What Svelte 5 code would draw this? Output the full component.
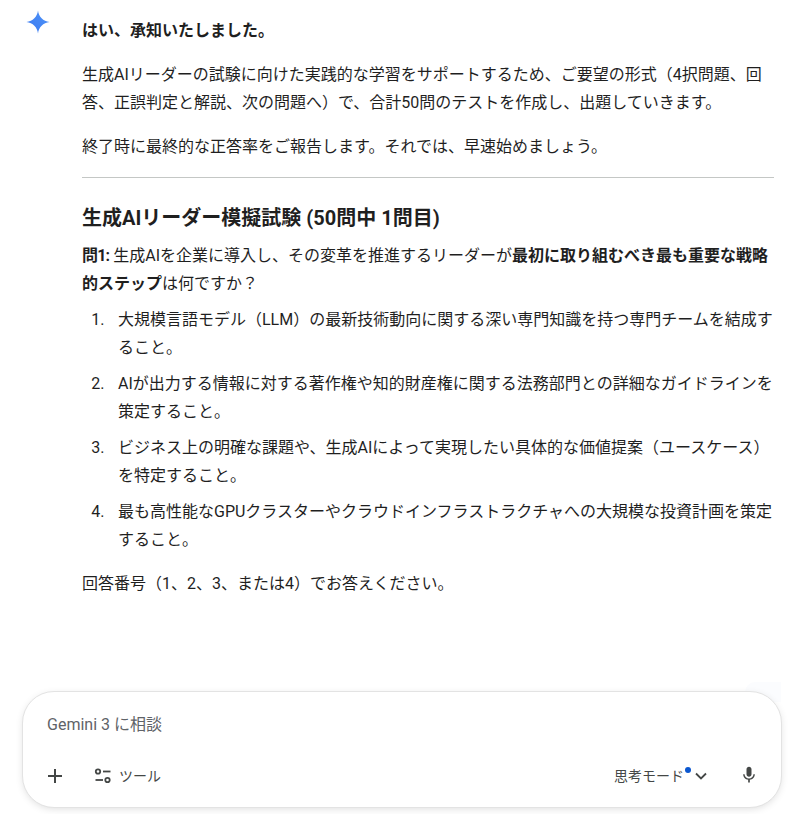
<script>
  const options = [
    '大規模言語モデル（LLM）の最新技術動向に関する深い専門知識を持つ専門チームを結成すること。',
    'AIが出力する情報に対する著作権や知的財産権に関する法務部門との詳細なガイドラインを策定すること。',
    'ビジネス上の明確な課題や、生成AIによって実現したい具体的な価値提案（ユースケース）を特定すること。',
    '最も高性能なGPUクラスターやクラウドインフラストラクチャへの大規模な投資計画を策定すること。'
  ];
</script>

<div class="page">
  <main class="response">
    <div class="avatar">
      <svg width="24" height="24" viewBox="0 0 24 24">
        <defs>
          <linearGradient id="spark" x1="0" y1="1" x2="1" y2="0">
            <stop offset="0" stop-color="#3b78f0" />
            <stop offset="1" stop-color="#4f95f8" />
          </linearGradient>
        </defs>
        <path fill="url(#spark)" d="M12 0.5C12.7 6.8 17.2 11.3 23.5 12C17.2 12.7 12.7 17.2 12 23.5C11.3 17.2 6.8 12.7 0.5 12C6.8 11.3 11.3 6.8 12 0.5Z" />
      </svg>
    </div>
    <div class="content">
      <p><strong>はい、承知いたしました。</strong></p>
      <p>生成AIリーダーの試験に向けた実践的な学習をサポートするため、ご要望の形式（4択問題、回答、正誤判定と解説、次の問題へ）で、合計50問のテストを作成し、出題していきます。</p>
      <p>終了時に最終的な正答率をご報告します。それでは、早速始めましょう。</p>
      <hr />
      <h2>生成AIリーダー模擬試験 (50問中 1問目)</h2>
      <p class="question"><strong class="qno">問1:</strong> 生成AIを企業に導入し、その変革を推進するリーダーが<strong>最初に取り組むべき最も重要な戦略的ステップ</strong>は何ですか？</p>
      <ol>
        {#each options as option}
          <li>{option}</li>
        {/each}
      </ol>
      <p>回答番号（1、2、3、または4）でお答えください。</p>
    </div>
  </main>

  <div class="composer">
    <div class="placeholder">Gemini 3 に相談</div>
    <div class="toolbar">
      <div class="left">
        <svg class="plus" width="24" height="24" viewBox="0 0 24 24"><path fill="#444746" d="M11 13H5v-2h6V5h2v6h6v2h-6v6h-2z" /></svg>
        <div class="tools">
          <svg width="20" height="20" viewBox="0 0 20 20" fill="none" stroke="#444746" stroke-width="1.8">
            <circle cx="5" cy="5.5" r="2.2" />
            <path d="M10 5.5h7.500" />
            <circle cx="14.500" cy="14" r="2.2" />
            <path d="M2.500 14h7.500" />
          </svg>
          <span>ツール</span>
        </div>
      </div>
      <div class="right">
        <div class="mode">
          <span class="mode-label">思考モード<i class="dot"></i></span>
          <svg width="18" height="18" viewBox="0 0 18 18" fill="none" stroke="#444746" stroke-width="1.8"><path d="M4 6.500l5 5 5-5" /></svg>
        </div>
        <svg class="mic" width="20" height="20" viewBox="0 0 24 24"><path fill="#444746" d="M12 14c1.66 0 3-1.34 3-3V5c0-1.66-1.34-3-3-3S9 3.34 9 5v6c0 1.66 1.34 3 3 3zm5.300-3c0 3-2.540 5.100-5.300 5.100S6.700 14 6.700 11H5c0 3.410 2.720 6.230 6 6.720V21h2v-3.280c3.280-.49 6-3.310 6-6.720h-1.700z" /></svg>
      </div>
    </div>
  </div>
</div>

<style>
  :global(body) {
    margin: 0;
    background: #fff;
  }

  .page {
    width: 790px;
    height: 814px;
    overflow: hidden;
    font-family: Roboto, "Noto Sans CJK JP", sans-serif;
    color: #1f1f1f;
    font-size: 16px;
    line-height: 28px;
    display: flex;
    flex-direction: column;
  }

  .response {
    flex: 1;
    display: flex;
    padding: 17px 16px 0 26px;
  }

  .avatar {
    width: 24px;
    height: 24px;
    margin-top: -7px;
    margin-right: 32px;
    flex-shrink: 0;
  }

  .content {
    width: 692px;
  }

  p {
    margin: 0 0 16px;
  }

  p.question {
    margin-bottom: 8px;
  }

  strong {
    font-weight: 700;
  }

  .qno {
    letter-spacing: -0.8px;
  }

  hr {
    border: 0;
    border-top: 1px solid #c4c7c5;
    margin: 15px 0 26px;
  }

  h2 {
    font-size: 20px;
    line-height: 28px;
    font-weight: 700;
    margin: 0 0 10px;
  }

  ol {
    margin: 0 0 16px;
    padding-left: 36px;
  }

  li {
    margin-bottom: 8px;
  }

  li::marker {
    content: counter(list-item) ".\00a0\00a0\00a0\200a";
  }

  .composer {
    position: relative;
    width: 760px;
    height: 117px;
    margin: 0 0 6px 22px;
    box-sizing: border-box;
    border: 1px solid #e3e3e3;
    border-radius: 32px;
    background: #fff;
    box-shadow: 0 2px 8px -2px rgba(0, 0, 0, 0.16);
    padding: 21px 24px 0;
    display: flex;
    flex-direction: column;
  }

  .composer::before {
    content: "";
    position: absolute;
    z-index: -1;
    top: -10px;
    right: 0;
    width: 36px;
    height: 20px;
    border-radius: 10px 0 0 0;
    background: #fbfcfe;
  }

  .placeholder {
    color: #5f6368;
    line-height: 24px;
  }

  .toolbar {
    display: flex;
    justify-content: space-between;
    align-items: center;
    margin-top: 27px;
    height: 24px;
    font-size: 14px;
    color: #444746;
    margin-left: -4px;
  }

  .left,
  .right,
  .tools,
  .mode {
    display: flex;
    align-items: center;
  }

  .tools {
    margin-left: 26px;
    gap: 6px;
  }

  .mode-label {
    position: relative;
    padding-right: 2px;
  }

  .dot {
    position: absolute;
    right: -5px;
    top: 5px;
    width: 6px;
    height: 6px;
    border-radius: 50%;
    background: #0b57d0;
  }

  .mode svg {
    margin-left: 6px;
  }

  .mic {
    margin-left: 29px;
    margin-right: -2px;
    margin-bottom: 2px;
  }
</style>
